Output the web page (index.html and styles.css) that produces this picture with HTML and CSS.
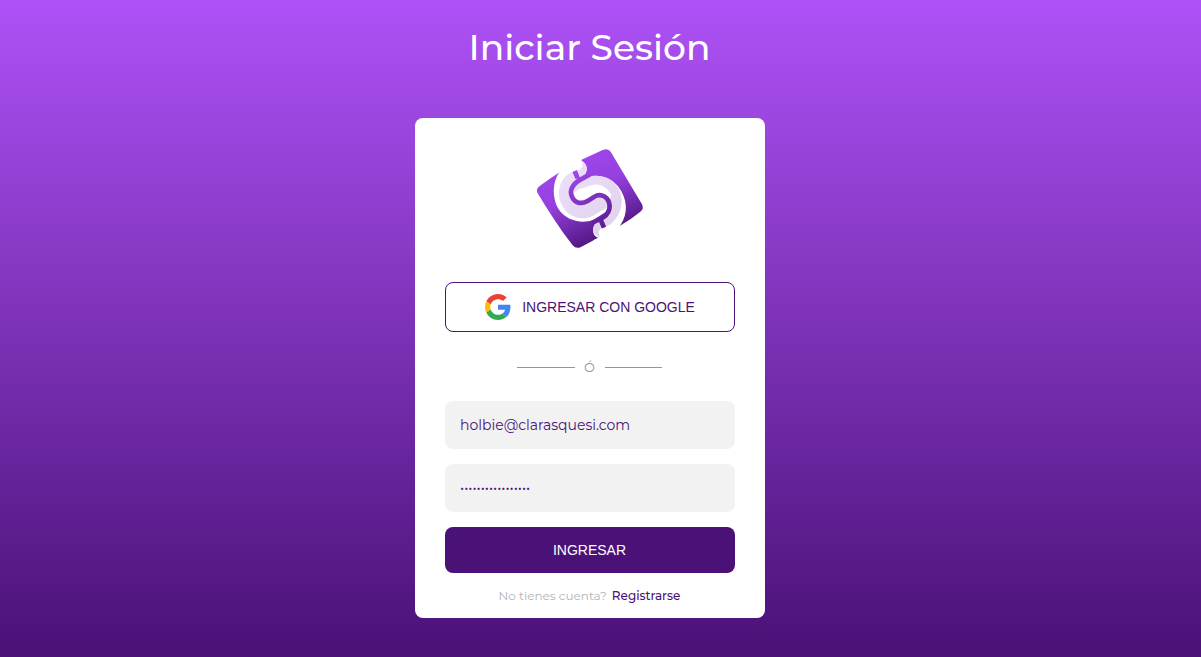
FILE: index.html
```html
<!DOCTYPE html>
<html lang="es">
<head>
<meta charset="utf-8">
<title>Iniciar Sesión</title>
<link rel="stylesheet" href="styles.css">
</head>
<body>
<main class="page">
  <h1 class="title"><span class="title-text">Iniciar Sesión</span></h1>
  <section class="card">
    <svg class="logo" viewBox="0 0 360 345" aria-hidden="true">
      <defs>
        <linearGradient id="body" x1="0.3" y1="0.1" x2="0.7" y2="0.93">
          <stop offset="0" stop-color="#a046ec"/><stop offset=".4" stop-color="#9540de"/><stop offset="1" stop-color="#4a1277"/>
        </linearGradient>
        <linearGradient id="line" gradientUnits="userSpaceOnUse" x1="130" y1="90" x2="230" y2="260">
          <stop offset="0" stop-color="#a348ef"/><stop offset="1" stop-color="#5b1b91"/>
        </linearGradient>
        <linearGradient id="soft" gradientUnits="userSpaceOnUse" x1="110" y1="90" x2="250" y2="280">
          <stop offset="0" stop-color="#ecdffa"/><stop offset="1" stop-color="#e0d1eb"/>
        </linearGradient>
      </defs>
      <path fill="url(#body)" d="M30 137 Q92 91 155 59 L218 30 Q234 23 242 35 L336 193 Q343 207 331 215 Q302 239 270 257 L205 293 L153 321 Q138 328 128 316 C88 265 54 212 23 160 Q16 147 30 137Z"/>
      <path fill="#fff" d="M88 97 C66 128 67 174 84 205 C108 244 155 252 190 240 L228 215 L238 185 L216 163 L150 188 L124 158 L140 118 L163 106 C174 94 174 72 155 62 L150 35 L88 75Z"/>
      <path fill="#fff" d="M153 117 C194 98 239 107 264 139 C293 176 296 222 270 257 L266 330 L190 301 L205 293 C188 290 185 267 195 252 L220 235 L238 200 L220 169 L150 190 L123 158Z"/>
      <path fill="url(#soft)" d="M128 95 C92 109 78 153 93 190 C110 231 152 245 188 228 L230 203 L231 185 L210 170 L165 194 L130 185 L118 153 L136 117 L163 104 C174 91 171 70 155 63 C162 75 156 85 144 91Z"/>
      <path fill="url(#soft)" d="M151 118 C192 98 239 107 260 137 C286 173 277 225 240 254 L212 265 C205 274 206 285 211 291 C190 288 185 267 195 252 L221 236 L246 202 L237 169 C218 149 194 153 176 165 C156 178 141 179 133 166 C128 150 133 132 151 118Z"/>
      <path fill="#fff" d="M129 164 C137 146 160 146 176 138 C202 126 230 137 244 165 L238 184 C229 166 211 159 192 171 L174 182 C154 194 134 186 129 164Z"/>
      <path fill="none" stroke="url(#line)" stroke-width="14" d="M180 103 L158 115 C128 129 117 151 126 170 C134 190 154 194 174 182 L192 171 C211 159 231 169 237 187 C243 208 233 225 217 234 L185 249 M134 93 L143 115 M211 237 L222 263"/>
    </svg>
    <button class="google" type="button">
      <svg class="google-icon" viewBox="0 0 48 48" aria-hidden="true">
        <path fill="#ea4335" d="M24 9.5c3.54 0 6.71 1.22 9.21 3.6l6.85-6.85C35.9 2.38 30.47 0 24 0 14.62 0 6.51 5.38 2.56 13.22l7.98 6.19C12.43 13.72 17.74 9.5 24 9.5z"/>
        <path fill="#4285f4" d="M46.98 24.55c0-1.57-.15-3.09-.38-4.55H24v9.02h12.94c-.58 2.96-2.26 5.48-4.78 7.18l7.73 6c4.51-4.18 7.09-10.36 7.09-17.65z"/>
        <path fill="#fbbc05" d="M10.53 28.59A14.5 14.5 0 0 1 9.77 24c0-1.6.27-3.14.76-4.59l-7.98-6.19A24 24 0 0 0 0 24c0 3.88.92 7.54 2.56 10.78z"/>
        <path fill="#34a853" d="M24 48c6.48 0 11.93-2.13 15.89-5.81l-7.73-6c-2.15 1.45-4.92 2.3-8.16 2.3-6.26 0-11.57-4.22-13.47-9.91l-7.98 6.19C6.51 42.62 14.62 48 24 48z"/>
      </svg>
      <span>INGRESAR CON GOOGLE</span>
    </button>
    <div class="divider"><span class="rule"></span><span class="or">Ó</span><span class="rule"></span></div>
    <div class="field"><span class="email">holbie@clarasquesi.com</span></div>
    <div class="field"><span class="dots">•••••••••••••••••</span></div>
    <button class="submit" type="button">INGRESAR</button>
    <p class="signup"><span class="question">No tienes cuenta?</span><a class="register">Registrarse</a></p>
  </section>
</main>
</body>
</html>
```
FILE: styles.css
```css
* { box-sizing: border-box; }
body {
  margin: 0;
  height: 657px;
  overflow: hidden;
  background: linear-gradient(#ae52f7, #4a1176);
  font-family: Montserrat, Inter, sans-serif;
}
.page {
  display: flex;
  flex-direction: column;
  align-items: center;
  padding: 25px 21px 0 0;
}
.title {
  margin: 0 1px 49px 0;
  height: 44px;
  line-height: 44px;
  font-size: 36px;
  font-weight: 500;
  color: #fff;
  white-space: nowrap;
}
.card {
  width: 350px;
  height: 500px;
  padding: 22px 30px 0;
  display: flex;
  flex-direction: column;
  align-items: center;
  background: #fff;
  border-radius: 8px;
}
.logo { width: 120px; height: 115px; flex: none; margin-bottom: 27px; }
.google {
  width: 290px;
  height: 50px;
  flex: none;
  display: flex;
  align-items: center;
  justify-content: center;
  gap: 11px;
  padding: 0;
  background: #fff;
  border: 1px solid #4a1176;
  border-radius: 8px;
  color: #4a1176;
  font: 14px "Liberation Sans", Arial, sans-serif;
  white-space: nowrap;
}
.google-icon { width: 26px; height: 26px; }
.divider {
  display: flex;
  align-items: center;
  justify-content: center;
  width: 145px;
  height: 20px;
  margin: 25px 1px 24px 0;
  color: #969696;
}
.rule { flex: 1; height: 1px; background: #969696; }
.or { width: 30px; text-align: center; font-size: 13px; }
.field {
  width: 290px;
  height: 48px;
  flex: none;
  display: flex;
  align-items: center;
  padding: 0 15px 1px;
  margin-bottom: 15px;
  background: #f2f2f2;
  border-radius: 8px;
  color: #4a1176;
}
.email { font-size: 14px; font-weight: 400; white-space: nowrap; }
.dots { font-size: 14px; }
.submit {
  width: 290px;
  height: 46px;
  flex: none;
  padding: 0 1px 0 0;
  border: 0;
  border-radius: 8px;
  background: #4a1176;
  color: #fff;
  font: 14px "Liberation Sans", Arial, sans-serif;
}
.signup {
  display: flex;
  gap: 5px;
  margin: 14px 1px 0 0;
  font-size: 12px;
  line-height: 17px;
  white-space: nowrap;
}
.question { color: #b4b4b4; }
.register { color: #4a1176; font-weight: 500; }
```
